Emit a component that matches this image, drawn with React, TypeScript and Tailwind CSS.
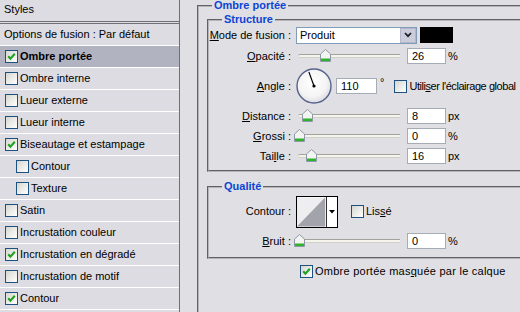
import React from "react";

// Layer style dialog (Photoshop, XP silver theme)

const STYLES = [
  { label: "Ombre portée", checked: true, active: true },
  { label: "Ombre interne" },
  { label: "Lueur externe" },
  { label: "Lueur interne" },
  { label: "Biseautage et estampage", checked: true },
  { label: "Contour", indent: true },
  { label: "Texture", indent: true },
  { label: "Satin" },
  { label: "Incrustation couleur" },
  { label: "Incrustation en dégradé", checked: true },
  { label: "Incrustation de motif" },
  { label: "Contour", checked: true },
];

function Check({ checked }: { checked?: boolean }) {
  return (
    <span className="w-[13px] h-[13px] shrink-0 border border-[#1c5180] bg-linear-to-br from-[#d6d6d0] to-white flex items-center justify-center">
      {checked && (
        <svg width="9" height="9" viewBox="0 0 9 9">
          <path d="M1.2 4.2 L3.4 6.6 L7.8 1.8" fill="none" stroke="#21a121" strokeWidth="2.1" />
        </svg>
      )}
    </span>
  );
}

// accelerator letter
function Acc({ pre, u, post }: { pre?: string; u: string; post?: string }) {
  return (
    <>
      {pre}
      <span className="underline underline-offset-[1px]">{u}</span>
      {post}
    </>
  );
}

function Label({ children }: { children: React.ReactNode }) {
  return <span className="w-[82px] shrink-0 text-right whitespace-nowrap">{children}</span>;
}

function Slider({ pos }: { pos: number }) {
  return (
    <div className="relative w-[106px] h-full ml-[5px] flex items-center shrink-0">
      <div className="mx-[2px] flex-1 h-[4px] rounded-l-full border-t border-[#a3a39e] border-b border-b-[#d0d0c8] bg-[#f4f4ec]" />
      <svg
        width="11"
        height="13"
        viewBox="0 0 11 13"
        className="absolute top-[3px]"
        style={{ left: pos - 2 }}
      >
        <path d="M5.5 0.5 L10.5 5 L10.5 12.5 L0.5 12.5 L0.5 5 Z" fill="#f3f3f1" stroke="#8e99a8" />
        <rect x="1" y="9.5" width="9" height="2.5" fill="#2fb32f" />
      </svg>
    </div>
  );
}

function Field({ value, className = "w-[39px] ml-[5px]" }: { value: string; className?: string }) {
  return (
    <div className={`${className} h-[16px] shrink-0 bg-white border border-[#a5acb5] pl-[4px] flex items-center leading-none`}>
      {value}
    </div>
  );
}

function SliderRow({
  label, pos, value, unit, className = "",
}: {
  label: React.ReactNode; pos: number; value: string; unit: string; className?: string;
}) {
  return (
    <div className={`h-[20px] flex items-center ${className}`}>
      <Label>{label}</Label>
      <Slider pos={pos} />
      <Field value={value} />
      <span className="ml-[2px]">{unit}</span>
    </div>
  );
}

function Dial({ angle }: { angle: number }) {
  const r = 15;
  const a = (angle * Math.PI) / 180;
  const x = 18 + r * Math.cos(a);
  const y = 18 - r * Math.sin(a);
  return (
    <svg width="36" height="36" viewBox="0 0 36 36" className="ml-[5px] shrink-0">
      <defs>
        <radialGradient id="dial" cx="45%" cy="40%" r="60%">
          <stop offset="0%" stopColor="#ffffff" />
          <stop offset="70%" stopColor="#f4f4f4" />
          <stop offset="100%" stopColor="#dcdce2" />
        </radialGradient>
      </defs>
      <circle cx="18" cy="18" r="17" fill="url(#dial)" stroke="#56638a" strokeWidth="1.4" />
      <line x1="18" y1="18" x2={x} y2={y} stroke="#000" strokeWidth="1.2" />
      <circle cx="18" cy="18" r="1.6" fill="#000" />
    </svg>
  );
}

export default function App() {
  return (
    <div className="w-[520px] h-[312px] overflow-hidden flex bg-[#e0dfe3] text-black text-[11px] font-['Liberation_Sans',Tahoma,Arial,sans-serif]">
      {/* Styles list */}
      <div className="w-[180px] shrink-0 h-full border-r border-[#6f6f74] bg-[#dcdce2]">
        <div className="h-[24px] pl-[4px] pb-[2px] flex items-center border-b-[3px] border-double border-[#707075]">
          Styles
        </div>
        <div className="h-[22px] pl-[4px] flex items-center border-b border-white">
          Options de fusion : Par défaut
        </div>
        {STYLES.map((s, i) => (
          <div
            key={i}
            className={`h-[22px] flex items-center gap-[2px] border-b border-white ${
              s.indent ? "pl-[16px]" : "pl-[5px]"
            } ${s.active ? "bg-[#b1b3c0] font-bold" : ""}`}
          >
            <Check checked={s.checked} />
            <span className="whitespace-nowrap">{s.label}</span>
          </div>
        ))}
      </div>

      {/* Options */}
      <div className="flex-1 h-full overflow-hidden">
        <fieldset className="ml-[17px] w-[400px] h-[340px] border-2 [border-style:groove] border-[#b4b4ba] pl-[8px] pr-[10px]">
          <legend className="ml-[5px] px-[2px] leading-[11px] font-bold text-[#0b45d4]">Ombre portée</legend>

          <fieldset className="mt-[3px] border-2 [border-style:groove] border-[#b4b4ba] pb-[4px]">
            <legend className="ml-[13px] px-[2px] leading-[11px] font-bold text-[#0b45d4]">Structure</legend>

            <div className="h-[20px] flex items-center">
              <Label><Acc u="M" post="ode de fusion :" /></Label>
              <div className="ml-[5px] w-[121px] h-[17px] shrink-0 bg-white border border-[#7f9db9] flex items-center">
                <span className="flex-1 pl-[3px]">Produit</span>
                <span className="w-[16px] h-[15px] bg-[#cbcdda] border border-[#b3b7c9] flex items-center justify-center">
                  <svg width="8" height="6" viewBox="0 0 8 6">
                    <path d="M1 1 L4 4.2 L7 1" fill="none" stroke="#1d1d2a" strokeWidth="1.8" />
                  </svg>
                </span>
              </div>
              <div className="ml-[3px] w-[33px] h-[16px] bg-black" />
            </div>

            <SliderRow className="mt-[1px]" label={<Acc u="O" post="pacité :" />} pos={26} value="26" unit="%" />

            <div className="h-[40px] flex items-center">
              <Label><Acc u="A" post="ngle :" /></Label>
              <Dial angle={110} />
              <Field value="110" className="w-[41px] ml-[4px]" />
              <span className="ml-[3px] -mt-[8px]">°</span>
              <span className="ml-[10px]"><Check /></span>
              <span className="ml-[2px] whitespace-nowrap tracking-[-0.45px]">
                <Acc pre="Utili" u="s" post="er l'éclairage global" />
              </span>
            </div>

            <SliderRow label={<Acc u="D" post="istance :" />} pos={8} value="8" unit="px" />
            <SliderRow label={<Acc u="G" post="rossi :" />} pos={0} value="0" unit="%" />
            <SliderRow label={<Acc pre="Tai" u="l" post="le :" />} pos={12} value="16" unit="px" />
          </fieldset>

          <fieldset className="mt-[9px] border-2 [border-style:groove] border-[#b4b4ba] pb-[6px]">
            <legend className="ml-[13px] px-[2px] leading-[11px] font-bold text-[#0b45d4]">Qualité</legend>

            <div className="h-[39px] flex items-center">
              <Label>Contour :</Label>
              <div className="ml-[5px] w-[42px] h-[32px] shrink-0 border border-black flex bg-white">
                <svg width="30" height="30" viewBox="0 0 30 30" className="border-r border-[#333]">
                  <rect width="30" height="30" fill="#eeeef0" />
                  <path d="M0 30 L29 0 L29 30 Z" fill="#a3a3ab" />
                </svg>
                <span className="flex-1 flex items-center justify-center">
                  <svg width="6" height="4" viewBox="0 0 6 4">
                    <path d="M0 0 L6 0 L3 3.5 Z" fill="#000" />
                  </svg>
                </span>
              </div>
              <span className="ml-[13px]"><Check /></span>
              <span className="ml-[2px]"><Acc pre="Lis" u="s" post="é" /></span>
            </div>

            <SliderRow className="h-[17px]" label={<Acc u="B" post="ruit :" />} pos={0} value="0" unit="%" />
          </fieldset>

          <div className="mt-[2px] h-[20px] pl-[93px] flex items-center gap-[2px]">
            <Check checked />
            <span className="whitespace-nowrap tracking-[0.25px]">
              Ombre portée mas<span className="underline underline-offset-[1px]">q</span>uée par le calque
            </span>
          </div>
        </fieldset>
      </div>
    </div>
  );
}
